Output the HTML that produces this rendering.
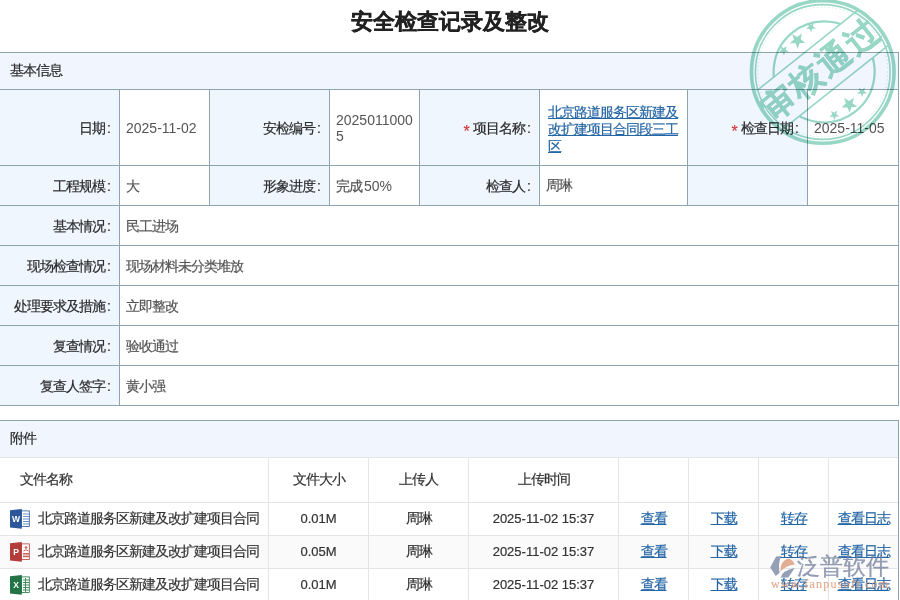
<!DOCTYPE html>
<html><head><meta charset="utf-8"><title>安全检查记录及整改</title>
<style>
html,body{margin:0;padding:0;background:#fff;}
body{width:900px;height:600px;overflow:hidden;position:relative;font-family:"Liberation Sans",sans-serif;font-size:14px;letter-spacing:-1px;-webkit-text-stroke:0.2px currentColor;}
.title{position:absolute;left:0;top:7px;width:899px;text-align:center;letter-spacing:0;font-size:22px;font-weight:bold;line-height:30px;color:#222;-webkit-text-stroke:0.3px #222;}
.star{color:#d23a3a;margin-right:3px;font-size:16px;position:relative;top:4px;letter-spacing:0;}
.num{font-size:14px;letter-spacing:0;-webkit-text-stroke:0;}
.lat{font-size:13px;letter-spacing:0;}
.co{letter-spacing:0;margin-left:2.5px;}
svg{letter-spacing:0;}
.lnk{color:#2566a6;text-decoration:underline;}
.ic{display:inline-block;width:20px;height:20px;vertical-align:middle;margin-right:8px;position:relative;top:1px;}
.fn{vertical-align:middle;}
</style></head><body>
<div class="title">安全检查记录及整改</div>
<div style="position:absolute;left:0px;top:53px;width:898px;height:36px;background:#f0f5fe"></div>
<div style="position:absolute;left:0px;top:53px;width:898px;height:36px;display:flex;align-items:center;box-sizing:border-box;color:#2b2b2b;padding-left:10px;padding-right:10px;padding-bottom:2px;"><div style="line-height:16px;word-break:break-all">基本信息</div></div>
<div style="position:absolute;left:0px;top:90px;width:119px;height:75px;display:flex;align-items:center;box-sizing:border-box;color:#2b2b2b;background:#f0f6fe;justify-content:flex-end;text-align:right;padding-right:8px;"><div style="line-height:16px;word-break:break-all">日期<span class="co">:</span></div></div>
<div style="position:absolute;left:120px;top:90px;width:89px;height:75px;display:flex;align-items:center;box-sizing:border-box;color:#555555;background:#fff;padding-left:6px;padding-right:6px;"><div style="line-height:16px;word-break:break-all"><span class="num">2025-11-02</span></div></div>
<div style="position:absolute;left:210px;top:90px;width:119px;height:75px;display:flex;align-items:center;box-sizing:border-box;color:#2b2b2b;background:#f0f6fe;justify-content:flex-end;text-align:right;padding-right:8px;"><div style="line-height:16px;word-break:break-all">安检编号<span class="co">:</span></div></div>
<div style="position:absolute;left:330px;top:90px;width:89px;height:75px;display:flex;align-items:center;box-sizing:border-box;color:#555555;background:#fff;padding-left:6px;padding-right:6px;"><div style="line-height:16px;word-break:break-all"><span class="num">2025011000<br>5</span></div></div>
<div style="position:absolute;left:420px;top:90px;width:119px;height:75px;display:flex;align-items:center;box-sizing:border-box;color:#2b2b2b;background:#f0f6fe;justify-content:flex-end;text-align:right;padding-right:8px;"><div style="line-height:16px;word-break:break-all"><span class="star">*</span>项目名称<span class="co">:</span></div></div>
<div style="position:absolute;left:540px;top:90px;width:147px;height:75px;display:flex;align-items:center;box-sizing:border-box;color:#555555;background:#fff;padding-left:8px;padding-right:8px;padding-top:3px;"><div style="line-height:17px;word-break:break-all"><a class="lnk">北京路道服务区新建及改扩建项目合同段三工区</a></div></div>
<div style="position:absolute;left:688px;top:90px;width:119px;height:75px;display:flex;align-items:center;box-sizing:border-box;color:#2b2b2b;background:#f0f6fe;justify-content:flex-end;text-align:right;padding-right:8px;"><div style="line-height:16px;word-break:break-all"><span class="star">*</span>检查日期<span class="co">:</span></div></div>
<div style="position:absolute;left:808px;top:90px;width:90px;height:75px;display:flex;align-items:center;box-sizing:border-box;color:#555555;background:#fff;padding-left:6px;padding-right:6px;"><div style="line-height:16px;word-break:break-all"><span class="num">2025-11-05</span></div></div>
<div style="position:absolute;left:0px;top:166px;width:119px;height:39px;display:flex;align-items:center;box-sizing:border-box;color:#2b2b2b;background:#f0f6fe;justify-content:flex-end;text-align:right;padding-right:8px;"><div style="line-height:16px;word-break:break-all">工程规模<span class="co">:</span></div></div>
<div style="position:absolute;left:120px;top:166px;width:89px;height:39px;display:flex;align-items:center;box-sizing:border-box;color:#555555;background:#fff;padding-left:6px;padding-right:6px;"><div style="line-height:16px;word-break:break-all">大</div></div>
<div style="position:absolute;left:210px;top:166px;width:119px;height:39px;display:flex;align-items:center;box-sizing:border-box;color:#2b2b2b;background:#f0f6fe;justify-content:flex-end;text-align:right;padding-right:8px;"><div style="line-height:16px;word-break:break-all">形象进度<span class="co">:</span></div></div>
<div style="position:absolute;left:330px;top:166px;width:89px;height:39px;display:flex;align-items:center;box-sizing:border-box;color:#555555;background:#fff;padding-left:6px;padding-right:6px;"><div style="line-height:16px;word-break:break-all">完成<span class="num" style="margin-left:2px">50%</span></div></div>
<div style="position:absolute;left:420px;top:166px;width:119px;height:39px;display:flex;align-items:center;box-sizing:border-box;color:#2b2b2b;background:#f0f6fe;justify-content:flex-end;text-align:right;padding-right:8px;"><div style="line-height:16px;word-break:break-all">检查人<span class="co">:</span></div></div>
<div style="position:absolute;left:540px;top:166px;width:147px;height:39px;display:flex;align-items:center;box-sizing:border-box;color:#555555;background:#fff;padding-left:6px;padding-right:6px;"><div style="line-height:17px;word-break:break-all">周琳</div></div>
<div style="position:absolute;left:688px;top:166px;width:119px;height:39px;display:flex;align-items:center;box-sizing:border-box;color:#2b2b2b;background:#f0f6fe;justify-content:flex-end;text-align:right;padding-right:8px;"><div style="line-height:16px;word-break:break-all"></div></div>
<div style="position:absolute;left:808px;top:166px;width:90px;height:39px;display:flex;align-items:center;box-sizing:border-box;color:#555555;background:#fff;padding-left:6px;padding-right:6px;"><div style="line-height:16px;word-break:break-all"></div></div>
<div style="position:absolute;left:0px;top:206px;width:119px;height:39px;display:flex;align-items:center;box-sizing:border-box;color:#2b2b2b;background:#f0f6fe;justify-content:flex-end;text-align:right;padding-right:8px;"><div style="line-height:16px;word-break:break-all">基本情况<span class="co">:</span></div></div>
<div style="position:absolute;left:120px;top:206px;width:778px;height:39px;display:flex;align-items:center;box-sizing:border-box;color:#555555;background:#fff;padding-left:6px;padding-right:6px;"><div style="line-height:16px;word-break:break-all">民工进场</div></div>
<div style="position:absolute;left:0px;top:246px;width:119px;height:39px;display:flex;align-items:center;box-sizing:border-box;color:#2b2b2b;background:#f0f6fe;justify-content:flex-end;text-align:right;padding-right:8px;"><div style="line-height:16px;word-break:break-all">现场检查情况<span class="co">:</span></div></div>
<div style="position:absolute;left:120px;top:246px;width:778px;height:39px;display:flex;align-items:center;box-sizing:border-box;color:#555555;background:#fff;padding-left:6px;padding-right:6px;"><div style="line-height:16px;word-break:break-all">现场材料未分类堆放</div></div>
<div style="position:absolute;left:0px;top:286px;width:119px;height:39px;display:flex;align-items:center;box-sizing:border-box;color:#2b2b2b;background:#f0f6fe;justify-content:flex-end;text-align:right;padding-right:8px;"><div style="line-height:16px;word-break:break-all">处理要求及措施<span class="co">:</span></div></div>
<div style="position:absolute;left:120px;top:286px;width:778px;height:39px;display:flex;align-items:center;box-sizing:border-box;color:#555555;background:#fff;padding-left:6px;padding-right:6px;"><div style="line-height:16px;word-break:break-all">立即整改</div></div>
<div style="position:absolute;left:0px;top:326px;width:119px;height:39px;display:flex;align-items:center;box-sizing:border-box;color:#2b2b2b;background:#f0f6fe;justify-content:flex-end;text-align:right;padding-right:8px;"><div style="line-height:16px;word-break:break-all">复查情况<span class="co">:</span></div></div>
<div style="position:absolute;left:120px;top:326px;width:778px;height:39px;display:flex;align-items:center;box-sizing:border-box;color:#555555;background:#fff;padding-left:6px;padding-right:6px;"><div style="line-height:16px;word-break:break-all">验收通过</div></div>
<div style="position:absolute;left:0px;top:366px;width:119px;height:39px;display:flex;align-items:center;box-sizing:border-box;color:#2b2b2b;background:#f0f6fe;justify-content:flex-end;text-align:right;padding-right:8px;"><div style="line-height:16px;word-break:break-all">复查人签字<span class="co">:</span></div></div>
<div style="position:absolute;left:120px;top:366px;width:778px;height:39px;display:flex;align-items:center;box-sizing:border-box;color:#555555;background:#fff;padding-left:6px;padding-right:6px;"><div style="line-height:16px;word-break:break-all">黄小强</div></div>
<div style="position:absolute;left:0px;top:52px;width:899px;height:1px;background:#8ea4ae"></div>
<div style="position:absolute;left:0px;top:89px;width:899px;height:1px;background:#8ea4ae"></div>
<div style="position:absolute;left:0px;top:165px;width:899px;height:1px;background:#8ea4ae"></div>
<div style="position:absolute;left:0px;top:205px;width:899px;height:1px;background:#8ea4ae"></div>
<div style="position:absolute;left:0px;top:245px;width:899px;height:1px;background:#8ea4ae"></div>
<div style="position:absolute;left:0px;top:285px;width:899px;height:1px;background:#8ea4ae"></div>
<div style="position:absolute;left:0px;top:325px;width:899px;height:1px;background:#8ea4ae"></div>
<div style="position:absolute;left:0px;top:365px;width:899px;height:1px;background:#8ea4ae"></div>
<div style="position:absolute;left:0px;top:405px;width:899px;height:1px;background:#8ea4ae"></div>
<div style="position:absolute;left:119px;top:89px;width:1px;height:117px;background:#8ea4ae"></div>
<div style="position:absolute;left:209px;top:89px;width:1px;height:117px;background:#8ea4ae"></div>
<div style="position:absolute;left:329px;top:89px;width:1px;height:117px;background:#8ea4ae"></div>
<div style="position:absolute;left:419px;top:89px;width:1px;height:117px;background:#8ea4ae"></div>
<div style="position:absolute;left:539px;top:89px;width:1px;height:117px;background:#8ea4ae"></div>
<div style="position:absolute;left:687px;top:89px;width:1px;height:117px;background:#8ea4ae"></div>
<div style="position:absolute;left:807px;top:89px;width:1px;height:117px;background:#8ea4ae"></div>
<div style="position:absolute;left:119px;top:205px;width:1px;height:201px;background:#8ea4ae"></div>
<div style="position:absolute;left:898px;top:52px;width:1px;height:354px;background:#8ea4ae"></div>
<div style="position:absolute;left:0px;top:421px;width:898px;height:36px;background:#f0f5fe"></div>
<div style="position:absolute;left:0px;top:421px;width:898px;height:36px;display:flex;align-items:center;box-sizing:border-box;color:#2b2b2b;padding-left:10px;padding-right:10px;padding-bottom:2px;"><div style="line-height:16px;word-break:break-all">附件</div></div>
<div style="position:absolute;left:0px;top:420px;width:899px;height:1px;background:#8ea4ae"></div>
<div style="position:absolute;left:0px;top:457px;width:898px;height:1px;background:#e3e5e8"></div>
<div style="position:absolute;left:0px;top:458px;width:898px;height:44px;background:#fff"></div>
<div style="position:absolute;left:0px;top:503px;width:898px;height:32px;background:#fff"></div>
<div style="position:absolute;left:0px;top:536px;width:898px;height:32px;background:#fafafa"></div>
<div style="position:absolute;left:0px;top:569px;width:898px;height:32px;background:#fff"></div>
<div style="position:absolute;left:0px;top:458px;width:268px;height:44px;display:flex;align-items:center;box-sizing:border-box;color:#333;padding-left:20px;padding-right:20px;padding-bottom:2px;"><div style="line-height:16px;word-break:break-all">文件名称</div></div>
<div style="position:absolute;left:269px;top:458px;width:99px;height:44px;display:flex;align-items:center;box-sizing:border-box;color:#333;justify-content:center;text-align:center;padding-bottom:2px;"><div style="line-height:16px;word-break:break-all">文件大小</div></div>
<div style="position:absolute;left:369px;top:458px;width:99px;height:44px;display:flex;align-items:center;box-sizing:border-box;color:#333;justify-content:center;text-align:center;padding-bottom:2px;"><div style="line-height:16px;word-break:break-all">上传人</div></div>
<div style="position:absolute;left:469px;top:458px;width:149px;height:44px;display:flex;align-items:center;box-sizing:border-box;color:#333;justify-content:center;text-align:center;padding-bottom:2px;"><div style="line-height:16px;word-break:break-all">上传时间</div></div>
<div style="position:absolute;left:619px;top:458px;width:69px;height:44px;display:flex;align-items:center;box-sizing:border-box;color:#333;justify-content:center;text-align:center;padding-bottom:2px;"><div style="line-height:16px;word-break:break-all"></div></div>
<div style="position:absolute;left:689px;top:458px;width:69px;height:44px;display:flex;align-items:center;box-sizing:border-box;color:#333;justify-content:center;text-align:center;padding-bottom:2px;"><div style="line-height:16px;word-break:break-all"></div></div>
<div style="position:absolute;left:759px;top:458px;width:69px;height:44px;display:flex;align-items:center;box-sizing:border-box;color:#333;justify-content:center;text-align:center;padding-bottom:2px;"><div style="line-height:16px;word-break:break-all"></div></div>
<div style="position:absolute;left:829px;top:458px;width:69px;height:44px;display:flex;align-items:center;box-sizing:border-box;color:#333;justify-content:center;text-align:center;padding-bottom:2px;"><div style="line-height:16px;word-break:break-all"></div></div>
<div style="position:absolute;left:0px;top:503px;width:268px;height:32px;display:flex;align-items:center;box-sizing:border-box;color:#333;padding-left:10px;padding-right:10px;white-space:nowrap;overflow:hidden;padding-bottom:2px;"><div style="line-height:16px;word-break:break-all"><svg class="ic" viewBox="0 0 20 20" width="20" height="20"><rect x="11.5" y="1.9" width="7.8" height="15.6" fill="#fff" stroke="#2b579a" stroke-width="0.8"/><g stroke="#6f8fcf" stroke-width="1"><line x1="13" y1="5" x2="19" y2="5"/><line x1="13" y1="7.5" x2="19" y2="7.5"/><line x1="13" y1="10" x2="19" y2="10"/><line x1="13" y1="12.5" x2="19" y2="12.5"/><line x1="13" y1="15" x2="19" y2="15"/></g><polygon points="0,1.3 11.8,0 11.8,19.8 0,18.5" fill="#2b579a"/><text x="6" y="13.3" text-anchor="middle" fill="#fff" font-family="Liberation Sans" font-weight="bold" font-size="8.5">W</text></svg><span class="fn">北京路道服务区新建及改扩建项目合同</span></div></div>
<div style="position:absolute;left:269px;top:503px;width:99px;height:32px;display:flex;align-items:center;box-sizing:border-box;color:#333;justify-content:center;text-align:center;padding-bottom:2px;"><div style="line-height:16px;word-break:break-all"><span class="lat">0.01M</span></div></div>
<div style="position:absolute;left:369px;top:503px;width:99px;height:32px;display:flex;align-items:center;box-sizing:border-box;color:#333;justify-content:center;text-align:center;padding-bottom:2px;"><div style="line-height:16px;word-break:break-all">周琳</div></div>
<div style="position:absolute;left:469px;top:503px;width:149px;height:32px;display:flex;align-items:center;box-sizing:border-box;color:#333;justify-content:center;text-align:center;padding-bottom:2px;"><div style="line-height:16px;word-break:break-all"><span class="lat">2025-11-02 15:37</span></div></div>
<div style="position:absolute;left:619px;top:503px;width:69px;height:32px;display:flex;align-items:center;box-sizing:border-box;color:#333;justify-content:center;text-align:center;padding-bottom:2px;"><div style="line-height:16px;word-break:break-all"><a class="lnk">查看</a></div></div>
<div style="position:absolute;left:689px;top:503px;width:69px;height:32px;display:flex;align-items:center;box-sizing:border-box;color:#333;justify-content:center;text-align:center;padding-bottom:2px;"><div style="line-height:16px;word-break:break-all"><a class="lnk">下载</a></div></div>
<div style="position:absolute;left:759px;top:503px;width:69px;height:32px;display:flex;align-items:center;box-sizing:border-box;color:#333;justify-content:center;text-align:center;padding-bottom:2px;"><div style="line-height:16px;word-break:break-all"><a class="lnk">转存</a></div></div>
<div style="position:absolute;left:829px;top:503px;width:69px;height:32px;display:flex;align-items:center;box-sizing:border-box;color:#333;justify-content:center;text-align:center;padding-bottom:2px;"><div style="line-height:16px;word-break:break-all"><a class="lnk">查看日志</a></div></div>
<div style="position:absolute;left:0px;top:536px;width:268px;height:32px;display:flex;align-items:center;box-sizing:border-box;color:#333;padding-left:10px;padding-right:10px;white-space:nowrap;overflow:hidden;padding-bottom:2px;"><div style="line-height:16px;word-break:break-all"><svg class="ic" viewBox="0 0 20 20" width="20" height="20"><rect x="11.5" y="1.9" width="7.8" height="15.6" fill="#fff" stroke="#b43c3a" stroke-width="0.8"/><circle cx="16" cy="5.5" r="1.3" fill="#c9675f"/><path d="M13.5 9 Q16 6.5 18.5 9" stroke="#c9675f" fill="none"/><rect x="13" y="11" width="6" height="1.6" fill="#c9675f"/><rect x="13" y="13.6" width="6" height="1.6" fill="#c9675f"/><polygon points="0,1.3 11.8,0 11.8,19.8 0,18.5" fill="#b43c3a"/><text x="6" y="13.3" text-anchor="middle" fill="#fff" font-family="Liberation Sans" font-weight="bold" font-size="8.5">P</text></svg><span class="fn">北京路道服务区新建及改扩建项目合同</span></div></div>
<div style="position:absolute;left:269px;top:536px;width:99px;height:32px;display:flex;align-items:center;box-sizing:border-box;color:#333;justify-content:center;text-align:center;padding-bottom:2px;"><div style="line-height:16px;word-break:break-all"><span class="lat">0.05M</span></div></div>
<div style="position:absolute;left:369px;top:536px;width:99px;height:32px;display:flex;align-items:center;box-sizing:border-box;color:#333;justify-content:center;text-align:center;padding-bottom:2px;"><div style="line-height:16px;word-break:break-all">周琳</div></div>
<div style="position:absolute;left:469px;top:536px;width:149px;height:32px;display:flex;align-items:center;box-sizing:border-box;color:#333;justify-content:center;text-align:center;padding-bottom:2px;"><div style="line-height:16px;word-break:break-all"><span class="lat">2025-11-02 15:37</span></div></div>
<div style="position:absolute;left:619px;top:536px;width:69px;height:32px;display:flex;align-items:center;box-sizing:border-box;color:#333;justify-content:center;text-align:center;padding-bottom:2px;"><div style="line-height:16px;word-break:break-all"><a class="lnk">查看</a></div></div>
<div style="position:absolute;left:689px;top:536px;width:69px;height:32px;display:flex;align-items:center;box-sizing:border-box;color:#333;justify-content:center;text-align:center;padding-bottom:2px;"><div style="line-height:16px;word-break:break-all"><a class="lnk">下载</a></div></div>
<div style="position:absolute;left:759px;top:536px;width:69px;height:32px;display:flex;align-items:center;box-sizing:border-box;color:#333;justify-content:center;text-align:center;padding-bottom:2px;"><div style="line-height:16px;word-break:break-all"><a class="lnk">转存</a></div></div>
<div style="position:absolute;left:829px;top:536px;width:69px;height:32px;display:flex;align-items:center;box-sizing:border-box;color:#333;justify-content:center;text-align:center;padding-bottom:2px;"><div style="line-height:16px;word-break:break-all"><a class="lnk">查看日志</a></div></div>
<div style="position:absolute;left:0px;top:569px;width:268px;height:32px;display:flex;align-items:center;box-sizing:border-box;color:#333;padding-left:10px;padding-right:10px;white-space:nowrap;overflow:hidden;padding-bottom:2px;"><div style="line-height:16px;word-break:break-all"><svg class="ic" viewBox="0 0 20 20" width="20" height="20"><rect x="11.5" y="1.9" width="7.8" height="15.6" fill="#fff" stroke="#227447" stroke-width="0.8"/><g stroke="#3f8f5f" stroke-width="1"><line x1="13" y1="5" x2="19" y2="5"/><line x1="13" y1="7.5" x2="19" y2="7.5"/><line x1="13" y1="10" x2="19" y2="10"/><line x1="13" y1="12.5" x2="19" y2="12.5"/><line x1="13" y1="15" x2="19" y2="15"/><line x1="15.5" y1="3" x2="15.5" y2="17"/></g><polygon points="0,1.3 11.8,0 11.8,19.8 0,18.5" fill="#227447"/><text x="6" y="13.3" text-anchor="middle" fill="#fff" font-family="Liberation Sans" font-weight="bold" font-size="8.5">X</text></svg><span class="fn">北京路道服务区新建及改扩建项目合同</span></div></div>
<div style="position:absolute;left:269px;top:569px;width:99px;height:32px;display:flex;align-items:center;box-sizing:border-box;color:#333;justify-content:center;text-align:center;padding-bottom:2px;"><div style="line-height:16px;word-break:break-all"><span class="lat">0.01M</span></div></div>
<div style="position:absolute;left:369px;top:569px;width:99px;height:32px;display:flex;align-items:center;box-sizing:border-box;color:#333;justify-content:center;text-align:center;padding-bottom:2px;"><div style="line-height:16px;word-break:break-all">周琳</div></div>
<div style="position:absolute;left:469px;top:569px;width:149px;height:32px;display:flex;align-items:center;box-sizing:border-box;color:#333;justify-content:center;text-align:center;padding-bottom:2px;"><div style="line-height:16px;word-break:break-all"><span class="lat">2025-11-02 15:37</span></div></div>
<div style="position:absolute;left:619px;top:569px;width:69px;height:32px;display:flex;align-items:center;box-sizing:border-box;color:#333;justify-content:center;text-align:center;padding-bottom:2px;"><div style="line-height:16px;word-break:break-all"><a class="lnk">查看</a></div></div>
<div style="position:absolute;left:689px;top:569px;width:69px;height:32px;display:flex;align-items:center;box-sizing:border-box;color:#333;justify-content:center;text-align:center;padding-bottom:2px;"><div style="line-height:16px;word-break:break-all"><a class="lnk">下载</a></div></div>
<div style="position:absolute;left:759px;top:569px;width:69px;height:32px;display:flex;align-items:center;box-sizing:border-box;color:#333;justify-content:center;text-align:center;padding-bottom:2px;"><div style="line-height:16px;word-break:break-all"><a class="lnk">转存</a></div></div>
<div style="position:absolute;left:829px;top:569px;width:69px;height:32px;display:flex;align-items:center;box-sizing:border-box;color:#333;justify-content:center;text-align:center;padding-bottom:2px;"><div style="line-height:16px;word-break:break-all"><a class="lnk">查看日志</a></div></div>
<div style="position:absolute;left:0px;top:502px;width:898px;height:1px;background:#e3e5e8"></div>
<div style="position:absolute;left:0px;top:535px;width:898px;height:1px;background:#e3e5e8"></div>
<div style="position:absolute;left:0px;top:568px;width:898px;height:1px;background:#e3e5e8"></div>
<div style="position:absolute;left:268px;top:458px;width:1px;height:143px;background:#e3e5e8"></div>
<div style="position:absolute;left:368px;top:458px;width:1px;height:143px;background:#e3e5e8"></div>
<div style="position:absolute;left:468px;top:458px;width:1px;height:143px;background:#e3e5e8"></div>
<div style="position:absolute;left:618px;top:458px;width:1px;height:143px;background:#e3e5e8"></div>
<div style="position:absolute;left:688px;top:458px;width:1px;height:143px;background:#e3e5e8"></div>
<div style="position:absolute;left:758px;top:458px;width:1px;height:143px;background:#e3e5e8"></div>
<div style="position:absolute;left:828px;top:458px;width:1px;height:143px;background:#e3e5e8"></div>
<div style="position:absolute;left:898px;top:420px;width:1px;height:181px;background:#8ea4ae"></div><svg style="position:absolute;left:0;top:0;width:900px;height:600px;mix-blend-mode:multiply;pointer-events:none" viewBox="0 0 900 600">
<defs><mask id="bm"><rect x="-100" y="-100" width="200" height="200" fill="#fff"/><rect x="-80" y="-26.5" width="160" height="46.5" fill="#000"/></mask></defs>
<g fill="none" stroke="#98d7c5">
<circle cx="822.75" cy="72" r="71.3" stroke-width="3.6"/>
<circle cx="822.75" cy="72" r="67.4" stroke-width="1.6"/>
<circle cx="822.75" cy="72" r="65" stroke-width="1" stroke-dasharray="1 2.8" opacity="0.6"/>
</g>
<g transform="translate(824,71) rotate(-38.5)" fill="none" stroke="#98d7c5">
<circle cx="-0.5" cy="0.8" r="50.5" stroke-width="2.2" mask="url(#bm)"/>
<g stroke-width="1.6"><line x1="-64.79" y1="-26.5" x2="64.79" y2="-26.5"/><line x1="-67.08" y1="20" x2="67.08" y2="20"/></g>
<g fill="#98d7c5" stroke="none"><polygon points="-1.80,-48.80 0.25,-43.32 6.09,-43.06 1.52,-39.42 3.08,-33.79 -1.80,-37.01 -6.68,-33.79 -5.12,-39.42 -9.69,-43.06 -3.85,-43.32"/><polygon points="17.10,-47.70 18.38,-44.27 22.05,-44.11 19.18,-41.83 20.16,-38.29 17.10,-40.32 14.04,-38.29 15.02,-41.83 12.15,-44.11 15.82,-44.27"/><polygon points="-18.70,-46.40 -17.42,-42.97 -13.75,-42.81 -16.62,-40.53 -15.64,-36.99 -18.70,-39.02 -21.76,-36.99 -20.78,-40.53 -23.65,-42.81 -19.98,-42.97"/><polygon points="-1.10,33.70 0.95,39.18 6.79,39.44 2.22,43.08 3.78,48.71 -1.10,45.49 -5.98,48.71 -4.42,43.08 -8.99,39.44 -3.15,39.18"/><polygon points="16.80,34.80 18.08,38.23 21.75,38.39 18.88,40.67 19.86,44.21 16.80,42.18 13.74,44.21 14.72,40.67 11.85,38.39 15.52,38.23"/><polygon points="-19.30,35.60 -18.02,39.03 -14.35,39.19 -17.22,41.47 -16.24,45.01 -19.30,42.98 -22.36,45.01 -21.38,41.47 -24.25,39.19 -20.58,39.03"/></g>
<g fill="#98d7c5" stroke="#98d7c5" stroke-width="0.4" style="font-family:'Liberation Sans';font-weight:bold;font-size:33px"><text x="-55.50" y="8" text-anchor="middle">审</text><text x="-20.20" y="8" text-anchor="middle">核</text><text x="15.10" y="8" text-anchor="middle">通</text><text x="50.40" y="8" text-anchor="middle">过</text></g>
</g></svg><svg style="position:absolute;left:765px;top:550px;width:34px;height:32px" viewBox="0 0 34 32">
<path d="M5.2 17.5 L11.1 6.4 L16.9 6.1 Q13.5 11 14 17.5 Q14.3 22 14.9 22.5 L10.8 26 Z" fill="#8a95ad" opacity="0.9"/>
<path d="M15.5 21.6 Q15 11 23.3 8.5 Q28 9.5 29.7 14.6 Q21 15.5 15.5 21.6 Z" fill="#e0a488" opacity="0.9"/>
<path d="M15.5 27.4 Q17.5 20.5 29.7 18 L23.3 27.4 Z" fill="#8a95ad" opacity="0.9"/>
</svg>
<div style="position:absolute;left:797px;top:551px;font-size:23px;line-height:30px;color:rgba(122,134,160,0.8);letter-spacing:0px;-webkit-text-stroke:0.3px rgba(122,134,160,0.8)">泛普软件</div>
<div style="position:absolute;left:771px;top:577px;font-family:'Liberation Serif',serif;font-size:12px;line-height:14px;letter-spacing:1.25px;color:rgba(222,150,115,0.75)">www.fanpusoft.com</div>
</body></html>
